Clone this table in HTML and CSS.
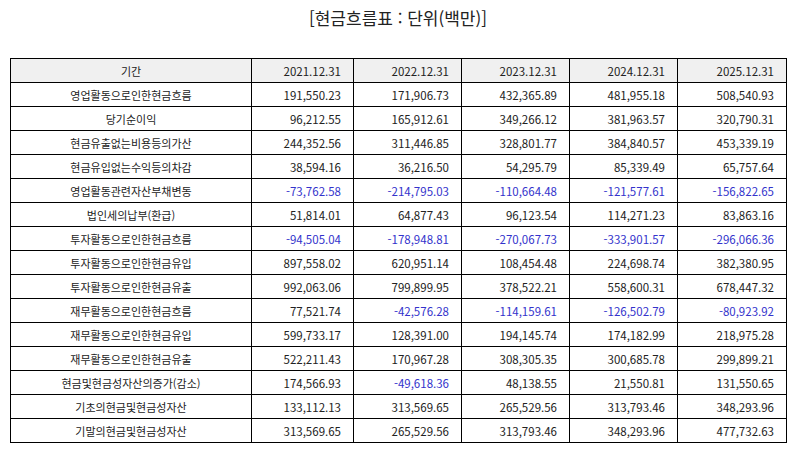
FILE: index.html
```html
<!DOCTYPE html>
<html lang="ko">
<head>
<meta charset="utf-8">
<link rel="stylesheet" href="styles.css">
</head>
<body>
<div class="page">
  <h1 class="title">[현금흐름표 : 단위(백만)]</h1>
  <table class="cf">
    <colgroup>
      <col class="c-label"><col class="c-narrow"><col class="c-mid"><col class="c-mid"><col class="c-mid"><col class="c-last">
    </colgroup>
    <thead>
      <tr><th class="label">기간</th><th>2021.12.31</th><th>2022.12.31</th><th>2023.12.31</th><th>2024.12.31</th><th>2025.12.31</th></tr>
    </thead>
    <tbody>
      <tr><td class="label">영업활동으로인한현금흐름</td><td>191,550.23</td><td>171,906.73</td><td>432,365.89</td><td>481,955.18</td><td>508,540.93</td></tr>
      <tr><td class="label">당기순이익</td><td>96,212.55</td><td>165,912.61</td><td>349,266.12</td><td>381,963.57</td><td>320,790.31</td></tr>
      <tr><td class="label">현금유출없는비용등의가산</td><td>244,352.56</td><td>311,446.85</td><td>328,801.77</td><td>384,840.57</td><td>453,339.19</td></tr>
      <tr><td class="label">현금유입없는수익등의차감</td><td>38,594.16</td><td>36,216.50</td><td>54,295.79</td><td>85,339.49</td><td>65,757.64</td></tr>
      <tr><td class="label">영업활동관련자산부채변동</td><td class="neg">-73,762.58</td><td class="neg">-214,795.03</td><td class="neg">-110,664.48</td><td class="neg">-121,577.61</td><td class="neg">-156,822.65</td></tr>
      <tr><td class="label">법인세의납부(환급)</td><td>51,814.01</td><td>64,877.43</td><td>96,123.54</td><td>114,271.23</td><td>83,863.16</td></tr>
      <tr><td class="label">투자활동으로인한현금흐름</td><td class="neg">-94,505.04</td><td class="neg">-178,948.81</td><td class="neg">-270,067.73</td><td class="neg">-333,901.57</td><td class="neg">-296,066.36</td></tr>
      <tr><td class="label">투자활동으로인한현금유입</td><td>897,558.02</td><td>620,951.14</td><td>108,454.48</td><td>224,698.74</td><td>382,380.95</td></tr>
      <tr><td class="label">투자활동으로인한현금유출</td><td>992,063.06</td><td>799,899.95</td><td>378,522.21</td><td>558,600.31</td><td>678,447.32</td></tr>
      <tr><td class="label">재무활동으로인한현금흐름</td><td>77,521.74</td><td class="neg">-42,576.28</td><td class="neg">-114,159.61</td><td class="neg">-126,502.79</td><td class="neg">-80,923.92</td></tr>
      <tr><td class="label">재무활동으로인한현금유입</td><td>599,733.17</td><td>128,391.00</td><td>194,145.74</td><td>174,182.99</td><td>218,975.28</td></tr>
      <tr><td class="label">재무활동으로인한현금유출</td><td>522,211.43</td><td>170,967.28</td><td>308,305.35</td><td>300,685.78</td><td>299,899.21</td></tr>
      <tr><td class="label">현금및현금성자산의증가(감소)</td><td>174,566.93</td><td class="neg">-49,618.36</td><td>48,138.55</td><td>21,550.81</td><td>131,550.65</td></tr>
      <tr><td class="label">기초의현금및현금성자산</td><td>133,112.13</td><td>313,569.65</td><td>265,529.56</td><td>313,793.46</td><td>348,293.96</td></tr>
      <tr><td class="label">기말의현금및현금성자산</td><td>313,569.65</td><td>265,529.56</td><td>313,793.46</td><td>348,293.96</td><td>477,732.63</td></tr>
    </tbody>
  </table>
</div>
</body>
</html>
```

FILE: styles.css
```css
html, body {
  margin: 0;
  padding: 0;
  background: #ffffff;
}
.page {
  padding: 0 9px 0 10px;
  font-family: "Noto Sans CJK KR", "Noto Sans", sans-serif;
  color: #222;
}
.title {
  margin: 0;
  height: 36px;
  line-height: 36px;
  font-size: 17px;
  font-weight: 400;
  text-align: center;
  color: #222;
}
.cf {
  margin-top: 22px;
  width: 777px;
  border-collapse: collapse;
  table-layout: fixed;
  font-size: 11.5px;
}
.c-label { width: 241px; }
.c-narrow { width: 102px; }
.c-mid { width: 108px; }
.c-last { width: 109px; }
.cf th, .cf td {
  border: 1px solid #000;
  height: 23px;
  padding: 0 12px 0 4px;
  text-align: right;
  font-weight: 400;
  line-height: 14px;
  white-space: nowrap;
}
.cf th {
  background: #f0f0f0;
}
.cf .label {
  text-align: center;
  padding: 0 4px;
  font-size: 11px;
}
.cf .neg {
  color: #3333cc;
}
```
